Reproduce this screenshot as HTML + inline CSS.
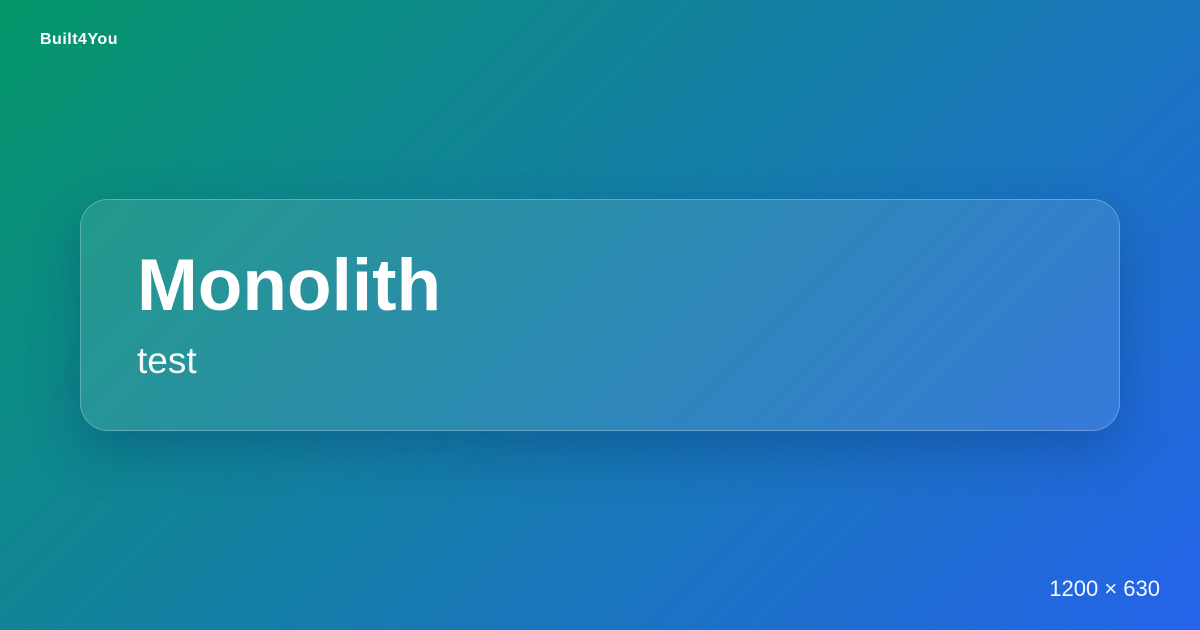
<!DOCTYPE html>
<html><head><style>
html,body{margin:0;padding:0}
body{width:1200px;height:630px;overflow:hidden;position:relative;font-family:"Liberation Sans",sans-serif;background:linear-gradient(135deg,#059669 0%,#2563eb 100%);color:#fff}
.brand{position:absolute;left:40px;top:31px;font-size:16px;font-weight:700;letter-spacing:0.5px}
.card{position:absolute;left:80px;top:199px;width:1038px;height:230px;border-radius:28px;background:rgba(255,255,255,0.1);border:1px solid rgba(255,255,255,0.25);box-shadow:0 20px 50px rgba(0,40,100,0.3)}
.title{position:absolute;left:56px;top:44px;font-size:73px;font-weight:700;line-height:84px}
.sub{position:absolute;left:56px;top:139px;font-size:37px;line-height:44px;opacity:0.95}
.dim{position:absolute;right:40px;top:576px;font-size:22px;opacity:0.95}
</style></head><body>
<div class="brand">Built4You</div>
<div class="card"><div class="title">Monolith</div><div class="sub">test</div></div>
<div class="dim">1200 × 630</div>
</body></html>
